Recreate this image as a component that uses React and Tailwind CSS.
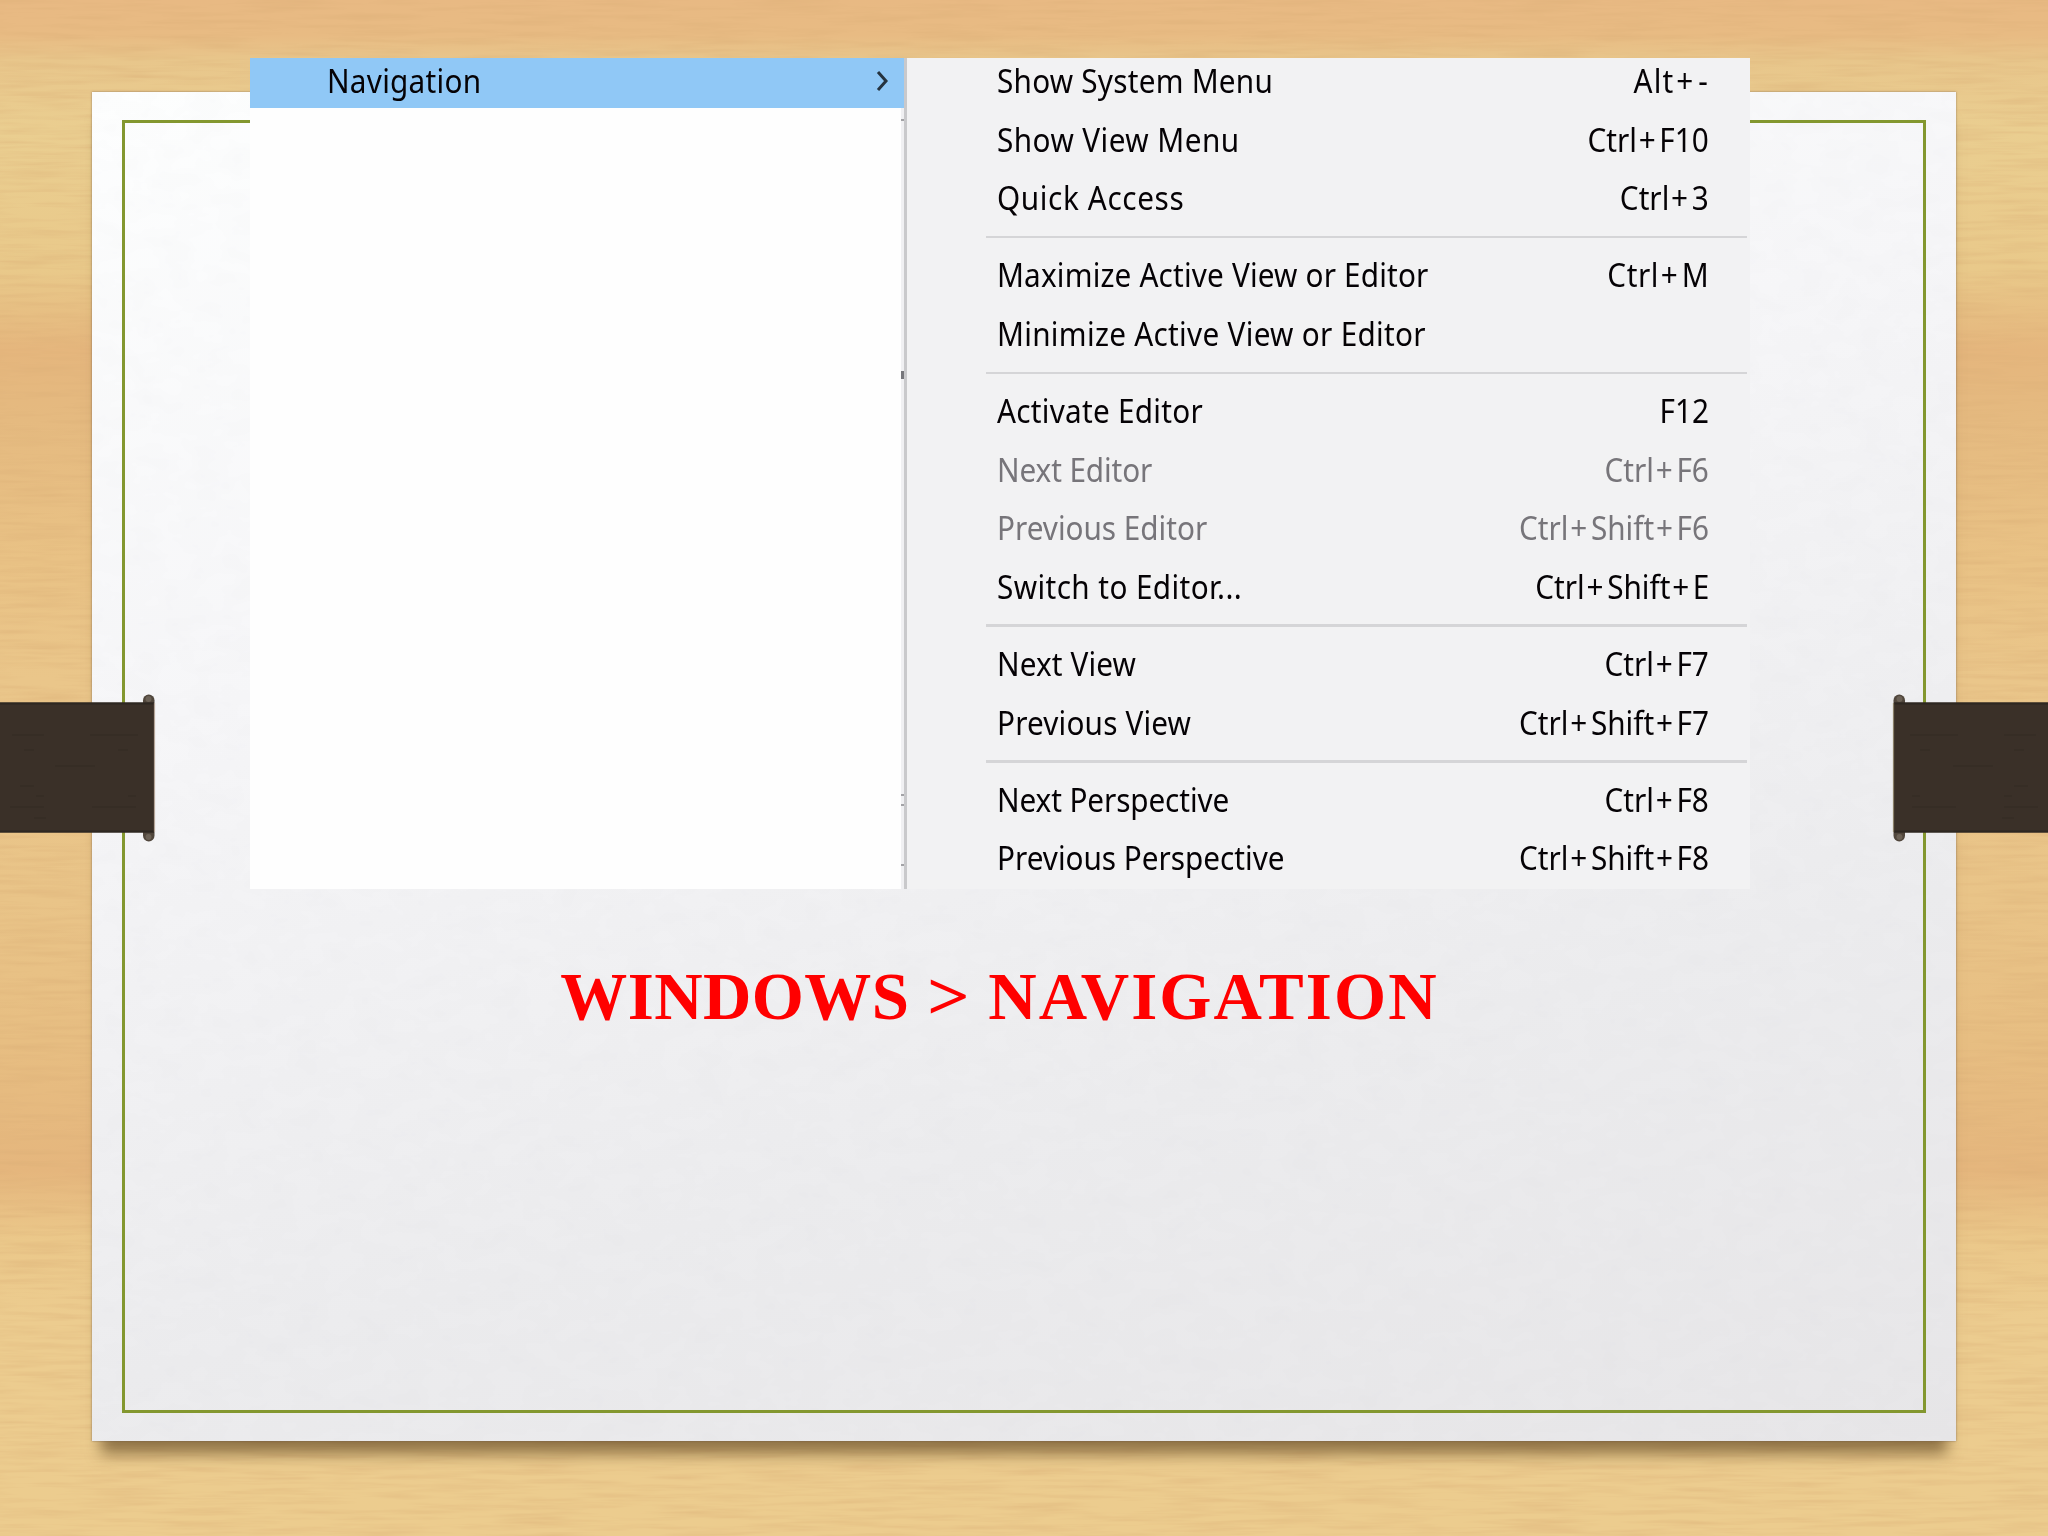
const groups = [
    [
        { label: 'Show System Menu', keys: ['Alt', '-'], tracking: 'tracking-[0.27px]', keyTracking: 'tracking-[1.4px]' },
        { label: 'Show View Menu', keys: ['Ctrl', 'F10'], tracking: 'tracking-[0.5px]' },
        { label: 'Quick Access', keys: ['Ctrl', '3'], tracking: 'tracking-[0.7px]' },
    ],
    [
        { label: 'Maximize Active View or Editor', keys: ['Ctrl', 'M'], tracking: 'tracking-[0.2px]', keyTracking: 'tracking-[0.6px]' },
        { label: 'Minimize Active View or Editor', keys: [], tracking: 'tracking-[0.34px]' },
    ],
    [
        { label: 'Activate Editor', keys: ['F12'], tracking: 'tracking-[0.3px]' },
        { label: 'Next Editor', keys: ['Ctrl', 'F6'], disabled: true, tracking: 'tracking-[-0.1px]' },
        { label: 'Previous Editor', keys: ['Ctrl', 'Shift', 'F6'], disabled: true, tracking: 'tracking-normal' },
        { label: 'Switch to Editor...', keys: ['Ctrl', 'Shift', 'E'], tracking: 'tracking-[0.46px]' },
    ],
    [
        { label: 'Next View', keys: ['Ctrl', 'F7'], tracking: 'tracking-[0.15px]' },
        { label: 'Previous View', keys: ['Ctrl', 'Shift', 'F7'], tracking: 'tracking-[0.2px]' },
    ],
    [
        { label: 'Next Perspective', keys: ['Ctrl', 'F8'], tracking: 'tracking-[-0.1px]' },
        { label: 'Previous Perspective', keys: ['Ctrl', 'Shift', 'F8'], tracking: 'tracking-normal' },
    ],
];

const MenuRow = ({ label, keys, disabled, tracking, keyTracking = '' }) => (
    <div
        className={`flex h-[58.65px] items-center justify-between pl-[90px] pr-[41px] ${
            disabled ? 'text-[#77757a]' : 'text-[#050205]'
        }`}
    >
        <span className={`origin-left scale-x-[0.9] ${tracking}`}>{label}</span>
        <span className={`origin-right scale-x-[0.9] ${keyTracking}`}>
            {keys.map((key, i) => (
                <span key={key}>
                    {i > 0 && <span className="ml-[2px] mr-[4px]">+</span>}
                    {key}
                </span>
            ))}
        </span>
    </div>
);

// Fine horizontal grain laid over a surface
const Grain = ({ id, frequency, matrix }) => (
    <svg className="pointer-events-none absolute inset-0 h-full w-full">
        <filter id={id} x="0" y="0" width="100%" height="100%">
            <feTurbulence type="fractalNoise" baseFrequency={frequency} numOctaves="3" seed="4" />
            <feColorMatrix values={matrix} />
        </filter>
        <rect width="100%" height="100%" filter={`url(#${id})`} />
    </svg>
);

const Strap = ({ flip }) => (
    <svg
        className={flip ? 'absolute right-0 top-[692px] -scale-x-100' : 'absolute left-0 top-[692px]'}
        width="156"
        height="152"
        viewBox="0 0 156 152"
    >
        <rect x="143" y="2.5" width="11.5" height="147" rx="5.7" fill="#50463c" />
        <rect x="145.5" y="4" width="6" height="6" rx="3" fill="#6b6156" />
        <rect x="145.5" y="142" width="6" height="6" rx="3" fill="#6b6156" />
        <rect y="10.5" width="154" height="130" fill="#3a3028" />
        <path d="M0 11.5h154M0 139.5h154" stroke="#2d2721" strokeWidth="2" />
        <path
            d="M12 43h32M90 43h48M24 58h10M118 58h10M55 74h40M20 94h14M36 104h8M128 104h8M10 115h34M92 115h44M34 126h12"
            stroke="#332a23"
            strokeWidth="1.2"
        />
        <path d="M154.5 11v129" stroke={flip ? '#8a8069' : '#b5a598'} strokeWidth="1.2" />
    </svg>
);

const App = () => {
    return (
        <div className="relative flex h-[1536px] w-[2048px] overflow-hidden bg-[linear-gradient(180deg,#e8b983_0,#e8bb83_35px,#e8c68b_60px,#eace90_130px,#e9c98a_270px,#e5b67d_350px,#e5ba80_420px,#e9c285_560px,#eac68a_680px,#e9c488_900px,#e7be82_1040px,#e5b67d_1170px,#ebc88a_1240px,#eccc8f_1320px,#eccc8e_1536px)] px-[92px] pt-[92px]">
            <Grain
                id="wood"
                frequency="0.012 0.2"
                matrix="0 0 0 0 0.7  0 0 0 0 0.42  0 0 0 0 0.18  0.8 0 0 0 -0.32"
            />

            {/* Paper */}
            <div className="relative h-[1349px] w-[1864px] bg-[linear-gradient(165deg,#fdfefe_0%,#f6f6f8_35%,#ececee_70%,#e7e6e8_100%)] px-[30px] pt-[28px] shadow-[0_0_2px_rgba(90,70,60,0.6),0_22px_14px_-9px_rgba(85,60,25,0.6)]">
                <Grain
                    id="paper"
                    frequency="0.03 0.05"
                    matrix="0 0 0 0 0.5  0 0 0 0 0.5  0 0 0 0 0.53  0.08 0 0 0 -0.025"
                />
                <div className="relative flex h-[1293px] flex-col items-center border-[3.5px] border-[#83972f]">
                    <h1 className="mr-[49px] mt-[823px] whitespace-nowrap font-['Liberation_Serif'] text-[67px] font-bold leading-[100px] text-[#ff0000]">
                        <span className="tracking-[0.4px]">WINDOWS</span>
                        <span className="mx-[18px] inline-block w-[43px]">
                            <span className="inline-block origin-left scale-x-[1.12]">&gt;</span>
                        </span>
                        <span className="tracking-[2.1px]">NAVIGATION</span>
                    </h1>
                </div>
            </div>

            <Strap />
            <Strap flip />

            {/* Menu over the paper */}
            <div className="absolute left-[250px] top-[58px] flex h-[831px] w-[1500px] overflow-hidden bg-[#fefefe] font-['Noto_Sans'] text-[33px]">
                <div className="w-[654px]">
                    <div className="flex h-[50px] items-center justify-between bg-[#90c8f6] pl-[77px] pr-[15px] text-[#050205]">
                        <span className="-mt-[4px] origin-left scale-x-[0.9] tracking-[0.3px]">Navigation</span>
                        <svg className="-mt-[4px]" width="13" height="20" viewBox="0 0 13 20" fill="none" stroke="#25333f" strokeWidth="3">
                            <path d="M2 1l8 9-8 9" />
                        </svg>
                    </div>
                    {/* Slivers of the window behind, showing along the edge */}
                    <svg className="ml-auto" width="3" height="781" viewBox="0 0 3 781">
                        <rect width="3" height="781" fill="#f0f0f2" />
                        <path d="M0 12h3M0 687h3M0 697h3M0 757h3" stroke="#a3a3a6" strokeWidth="2" />
                        <path d="M1.5 263v8" stroke="#77777b" strokeWidth="3" />
                    </svg>
                </div>
                <div className="flex-1 border-l-[3px] border-[#c9c9cb] bg-[#f2f2f3]">
                    <div className="-mt-[6.5px]">
                        {groups.map((group, i) => (
                            <div key={i}>
                                {i > 0 && (
                                    <div className="flex h-[18.4px] items-center pl-[79px] pr-[3px] pt-px">
                                        <div className="h-[2.5px] w-full bg-[#d5d5d7]" />
                                    </div>
                                )}
                                {group.map((item) => (
                                    <MenuRow key={item.label} {...item} />
                                ))}
                            </div>
                        ))}
                    </div>
                </div>
            </div>
        </div>
    );
};

export default App;
